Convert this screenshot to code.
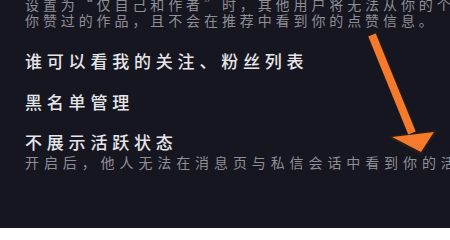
import React from "react";

const fonte = { fontFamily: '"Noto Sans CJK SC", "Noto Sans", sans-serif' };

function Seta() {
  return (
    <svg
      className="absolute inset-0 pointer-events-none"
      width="450"
      height="228"
      viewBox="0 0 450 228"
    >
      {/* contorno escuro */}
      <line x1="372" y1="34" x2="412" y2="132" stroke="#2a1c18" strokeWidth="10" />
      <polygon points="390,137 436,131 421,154" fill="#2a1c18" stroke="#2a1c18" strokeWidth="2" strokeLinejoin="round" />
      {/* seta laranja */}
      <line x1="372" y1="35" x2="412" y2="133" stroke="#f57a2b" strokeWidth="8" />
      <polygon points="392,137 434,132 421,152" fill="#f57a2b" />
    </svg>
  );
}

export default function App() {
  return (
    <div
      className="relative w-[450px] h-[228px] overflow-hidden bg-[#161620] pl-[25px]"
      style={fonte}
    >
      <div className="-mt-[4px] text-[14px] leading-[16px] text-[#8f8f96] tracking-[3.9px] whitespace-nowrap">
        <p>设置为“仅自己和作者”时，其他用户将无法从你的个人</p>
        <p>你赞过的作品，且不会在推荐中看到你的点赞信息。</p>
      </div>

      <div className="mt-[23px] text-[17px] leading-[20px] font-medium text-[#e6e6e9] tracking-[4.8px] whitespace-nowrap">
        谁可以看我的关注、粉丝列表
      </div>

      <div className="mt-[21px] text-[17px] leading-[20px] font-medium text-[#e6e6e9] tracking-[4.8px] whitespace-nowrap">
        黑名单管理
      </div>

      <div className="mt-[20px] text-[17px] leading-[20px] font-medium text-[#e6e6e9] tracking-[4.8px] whitespace-nowrap">
        不展示活跃状态
      </div>
      <div className="mt-[2px] text-[14px] leading-[16px] text-[#8f8f96] tracking-[4.9px] whitespace-nowrap">
        开启后，他人无法在消息页与私信会话中看到你的活跃状态
      </div>

      <Seta />
    </div>
  );
}
